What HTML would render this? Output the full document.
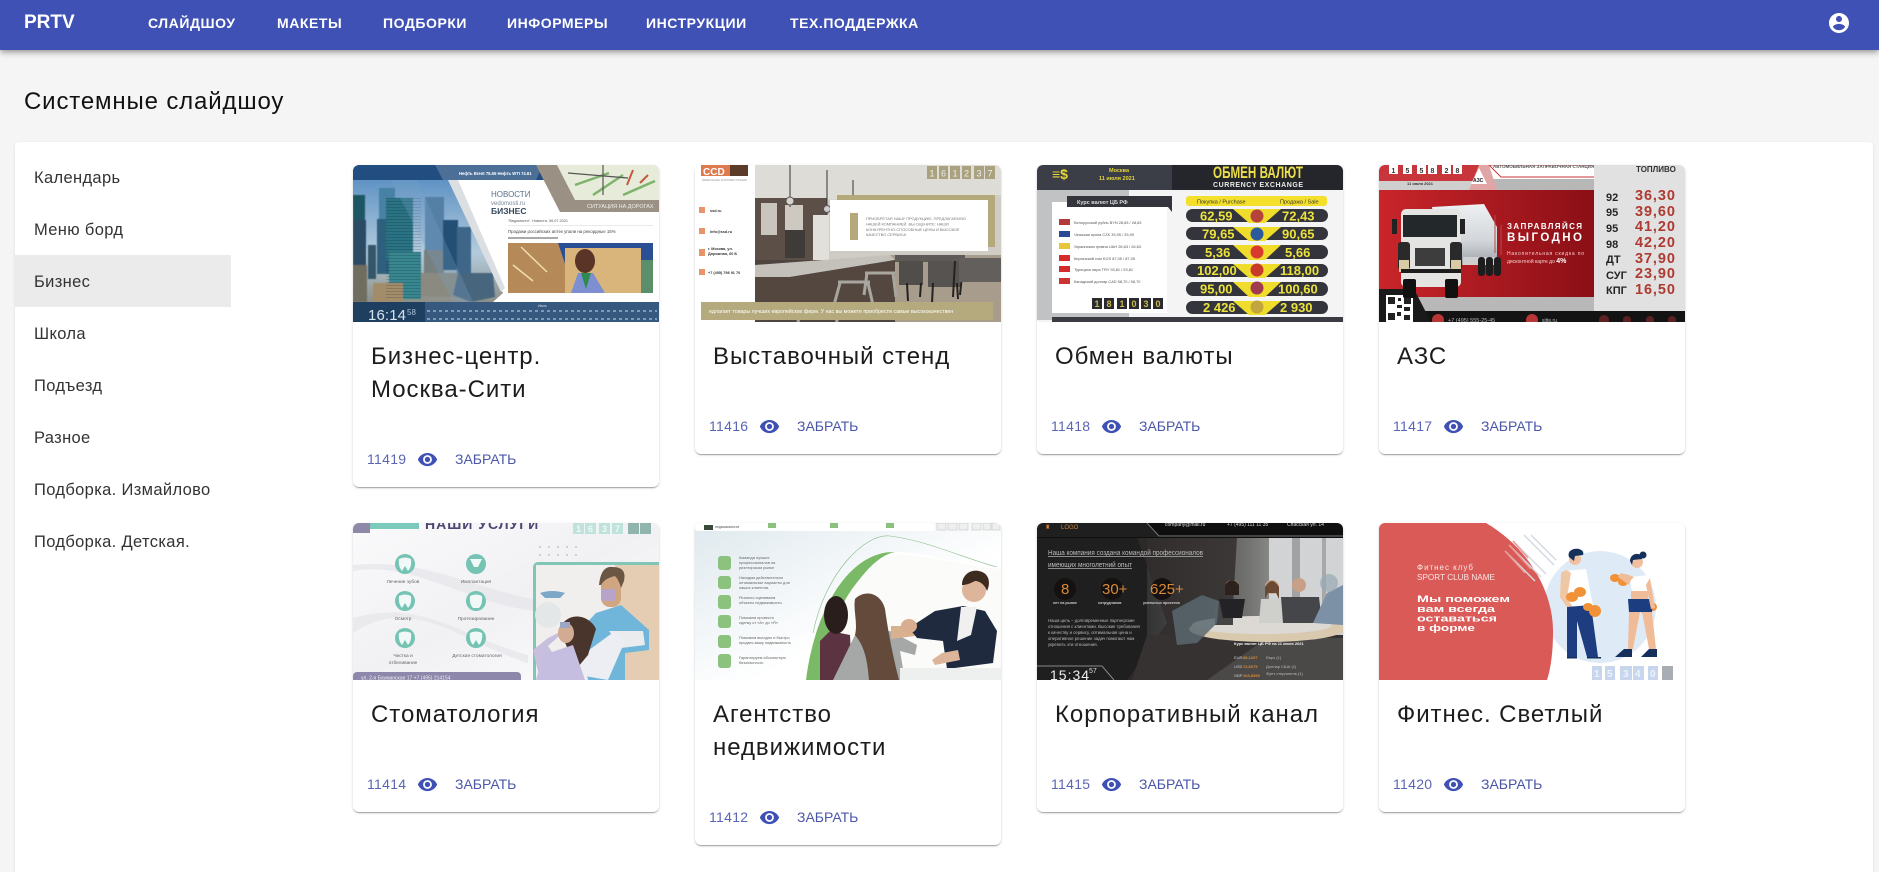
<!DOCTYPE html>
<html lang="ru"><head><meta charset="utf-8"><title>PRTV</title>
<style>
*{box-sizing:border-box}
html,body{margin:0;padding:0;width:1879px;height:863px;overflow:hidden;background:#f5f5f5;font-family:"Liberation Sans",sans-serif;color:rgba(0,0,0,.87)}
.hd{position:absolute;left:0;top:0;width:1879px;height:50px;background:#3f51b5;box-shadow:0 2px 4px -1px rgba(0,0,0,.2),0 4px 5px rgba(0,0,0,.14),0 1px 10px rgba(0,0,0,.12);z-index:3}
.hd span{position:absolute;top:0;line-height:46px;color:#fff;font-size:14px;font-weight:700;white-space:nowrap;letter-spacing:.55px}
.hd .logo{font-size:19px;left:24px;letter-spacing:0}
.hd svg{position:absolute;left:1827px;top:11px}
h1{position:absolute;left:24px;top:86px;margin:0;font-size:24px;line-height:32px;font-weight:400;color:#111;letter-spacing:.85px}
.panel{position:absolute;left:15px;top:142px;width:1858px;height:730px;background:#fff;border-radius:4px 4px 0 0;box-shadow:0 1px 3px rgba(0,0,0,.1)}
.it{position:absolute;left:15px;width:216px;height:52px;line-height:54px;padding-left:19px;font-size:16.5px;letter-spacing:.35px;color:#333}
.it.on{background:#ebebeb}
.card{position:absolute;width:306px;background:#fff;border-radius:6px;box-shadow:0 2px 1px -1px rgba(0,0,0,.2),0 1px 1px rgba(0,0,0,.14),0 1px 3px rgba(0,0,0,.12);overflow:hidden}
.card>svg{position:absolute;left:0;top:0;display:block;filter:blur(.35px)}
.t{position:absolute;left:18px;top:175px;font-size:24px;line-height:33px;color:#1c1c1c;width:288px;letter-spacing:.95px;white-space:nowrap}
.f{position:absolute;left:0;bottom:12px;height:32px;width:100%;line-height:32px;font-size:14px;color:#5a66b4}
.f b{position:absolute;left:14px;font-weight:400;letter-spacing:.3px}
.f i{position:absolute;left:102px;font-style:normal;color:#4a56a8;letter-spacing:0}
.f svg{position:absolute;left:63.5px;top:5.5px}
</style></head><body>
<div class="hd">
<span class="logo">PRTV</span>
<span style="left:148px">СЛАЙДШОУ</span><span style="left:277px">МАКЕТЫ</span><span style="left:383px">ПОДБОРКИ</span><span style="left:507px">ИНФОРМЕРЫ</span><span style="left:646px">ИНСТРУКЦИИ</span><span style="left:790px">ТЕХ.ПОДДЕРЖКА</span>
<svg width="24" height="24" viewBox="0 0 24 24" fill="#fff"><path d="M12 2C6.48 2 2 6.48 2 12s4.48 10 10 10 10-4.48 10-10S17.52 2 12 2zm0 3c1.66 0 3 1.34 3 3s-1.34 3-3 3-3-1.34-3-3 1.34-3 3-3zm0 14.2c-2.5 0-4.71-1.28-6-3.22.03-1.99 4-3.08 6-3.08 1.99 0 5.97 1.09 6 3.08-1.29 1.94-3.5 3.22-6 3.22z"/></svg>
</div>
<h1>Системные слайдшоу</h1>
<div class="panel"></div>
<div class="it" style="top:151px">Календарь</div>
<div class="it" style="top:203px">Меню борд</div>
<div class="it on" style="top:255px">Бизнес</div>
<div class="it" style="top:307px">Школа</div>
<div class="it" style="top:359px">Подъезд</div>
<div class="it" style="top:411px">Разное</div>
<div class="it" style="top:463px">Подборка. Измайлово</div>
<div class="it" style="top:515px">Подборка. Детская.</div>

<svg width="0" height="0" style="position:absolute"><defs>
<path id="eye" d="M12 4.5C7 4.5 2.73 7.61 1 12c1.73 4.39 6 7.5 11 7.5s9.27-3.11 11-7.5c-1.73-4.39-6-7.5-11-7.5zM12 17c-2.76 0-5-2.24-5-5s2.24-5 5-5 5 2.24 5 5-2.24 5-5 5zm0-8c-1.66 0-3 1.34-3 3s1.34 3 3 3 3-1.34 3-3-1.34-3-3-3z"/>
<linearGradient id="sky" x1="0" y1="0" x2="0" y2="1"><stop offset="0" stop-color="#5f93c4"/><stop offset=".6" stop-color="#b4cbdd"/><stop offset="1" stop-color="#8d8f86"/></linearGradient>
<linearGradient id="red" x1="0" y1="0" x2="1" y2="0"><stop offset="0" stop-color="#c9252a"/><stop offset="1" stop-color="#8b0f16"/></linearGradient>
<linearGradient id="pale" x1="0" y1="0" x2="1" y2="1"><stop offset="0" stop-color="#dfe9ee"/><stop offset=".6" stop-color="#fff"/></linearGradient>
<linearGradient id="wave" x1="0" y1="0" x2="1" y2="1"><stop offset="0" stop-color="#fafafb"/><stop offset=".5" stop-color="#f1f1f4"/><stop offset="1" stop-color="#fdfdfe"/></linearGradient>
<linearGradient id="office" x1="0" y1="0" x2="1" y2="0"><stop offset="0" stop-color="#333"/><stop offset=".5" stop-color="#6f6f6d"/><stop offset="1" stop-color="#cfd0d1"/></linearGradient>
<linearGradient id="silver" x1="0" y1="0" x2="0" y2="1"><stop offset="0" stop-color="#eef0f2"/><stop offset=".6" stop-color="#d2d6da"/><stop offset="1" stop-color="#9da2a8"/></linearGradient>
<filter id="bl"><feGaussianBlur stdDeviation=".6"/></filter>
<pattern id="win" width="3" height="3" patternUnits="userSpaceOnUse"><rect width="3" height="3" fill="none"/><rect width="3" height="1" fill="#000" opacity=".15"/></pattern>
</defs></svg>

<!-- card 1 -->
<div class="card" style="left:353px;top:165px;height:322px">
<svg width="306" height="157" viewBox="0 0 306 157" font-family="Liberation Sans">
<rect width="306" height="157" fill="#fff"/>
<polygon points="0,15 96,15 150,128 140,137 0,137" fill="url(#sky)"/>
<g filter="url(#bl)">
<rect x="0" y="30" width="12" height="25" fill="#1a5763"/><rect x="0" y="55" width="13" height="82" fill="#2a4c63"/>
<rect x="26" y="23" width="16" height="76" fill="#4781a3"/>
<rect x="24" y="54" width="12" height="55" fill="#2f5f7c"/>
<rect x="33" y="33" width="27" height="62" fill="#2a7385"/>
<rect x="36" y="87" width="32" height="47" fill="#37868f"/>
<rect x="72" y="32" width="19" height="58" fill="#5580a5"/><rect x="71" y="85" width="20" height="45" fill="#777f7f"/>
<rect x="90" y="55" width="15" height="50" fill="#214f73"/>
<rect x="104" y="62" width="14" height="50" fill="#3d6688"/>
<rect x="15" y="80" width="8" height="34" fill="#36566a"/>
<rect x="0" y="100" width="14" height="37" fill="#6e6d60"/><rect x="20" y="118" width="30" height="19" fill="#a28c6a"/>
<rect x="68" y="108" width="40" height="24" fill="#8a8a80"/>
<polygon points="105,108 140,108 142,132 118,137 100,130" fill="#46667e"/>
</g>
<rect x="33" y="33" width="35" height="100" fill="url(#win)"/>
<polygon points="38,15 64,15 120,137 100,137" fill="#7aa2c6" opacity=".28"/>
<rect width="192" height="15" fill="#224d80"/>
<polygon points="82,0 190,0 183,15 90,15" fill="#4b6f97"/>
<polygon points="95,15 105,15 152,123 148,127" fill="#dcdfe2"/>
<polygon points="183,0 306,0 306,47 207,47" fill="#9a9084"/>
<polygon points="204,0 306,0 306,35 222,35" fill="#e7ebd9"/>
<path d="M222 20l34-12M240 30l30-20M270 30l32-14" stroke="#7db36a" stroke-width="2.5" fill="none"/>
<path d="M250 0v30M215 8l60 5" stroke="#555" stroke-width="1.2" fill="none"/>
<path d="M280 5l-6 15M295 10l-8 8" stroke="#c55a3a" stroke-width="2" fill="none"/>
<text x="234" y="43" font-size="5.5" fill="#f3f0e8">СИТУАЦИЯ НА ДОРОГАХ</text>
<text x="106" y="10" font-size="4.2" font-weight="700" fill="#fff">Нефть Brent 75.55  Нефть WTI 74.61</text>
<text x="138" y="32" font-size="8" fill="#5a6f87">НОВОСТИ</text>
<text x="138" y="40" font-size="6" fill="#7a8a9a">vedomosti.ru</text>
<text x="138" y="49" font-size="8.5" font-weight="700" fill="#33475c">БИЗНЕС</text>
<text x="155" y="57" font-size="3.8" fill="#555">"Ведомости". Новости, 06.07.2021</text>
<rect x="155" y="60" width="145" height=".6" fill="#ddd"/>
<text x="155" y="68" font-size="4.4" fill="#444">Продажи российских аптек упали на рекордные 15%</text>
<rect x="155" y="72" width="50" height="2" fill="#aaa"/>
<rect x="155" y="78" width="145" height="50" fill="#2b4f95"/>
<polygon points="155,78 205,78 222,128 155,128" fill="#b58a58"/>
<rect x="212" y="83" width="76" height="45" fill="#d9b57c"/>
<rect x="288" y="95" width="12" height="33" fill="#5a8f6a"/>
<path d="M168 82l26 25M160 100l20 16" stroke="#f0dcae" stroke-width="1.5"/>
<ellipse cx="232" cy="96" rx="10" ry="12" fill="#5a3426"/>
<polygon points="218,128 225,108 240,108 252,128" fill="#7d8fd0"/>
<polygon points="228,108 238,108 233,124" fill="#2d8a50"/>
<rect x="0" y="137" width="306" height="20" fill="#37597f"/>
<rect x="0" y="137" width="72" height="20" fill="#1f3f60"/>
<text x="15" y="155" font-size="15" fill="#d6e4ef" textLength="38">16:14</text>
<text x="54" y="150" font-size="8" fill="#a9c1d6">58</text>
<path d="M74 146H304M74 154H304" stroke="#7e9ab7" stroke-width="2" stroke-dasharray="3 3"/>
<text x="185" y="142" font-size="3.5" fill="#dde">Июль</text>
</svg>
<div class="t">Бизнес-центр.<br>Москва-Сити</div>
<div class="f"><b>11419</b><svg width="21" height="21" viewBox="0 0 24 24" fill="#3f51b5"><use href="#eye"/></svg><i>ЗАБРАТЬ</i></div>
</div>

<!-- card 2 -->
<div class="card" style="left:695px;top:165px;height:289px">
<svg width="306" height="157" viewBox="0 0 306 157" font-family="Liberation Sans">
<rect width="306" height="157" fill="#fff"/>
<rect x="60" y="0" width="246" height="157" fill="#cfccc6"/>
<polygon points="60,0 306,0 306,30 180,35 60,34" fill="#dedcd7"/>
<rect x="60" y="33" width="72" height="65" fill="#5b4f48"/>
<rect x="66" y="38" width="16" height="32" fill="#c9c5be"/><rect x="90" y="40" width="18" height="28" fill="#cdc9c1"/>
<rect x="90" y="65" width="20" height="28" fill="#3f3b38"/>
<rect x="118" y="50" width="16" height="55" fill="#e2e0da"/>
<rect x="195" y="90" width="111" height="67" fill="#a89c8c"/>
<rect x="60" y="95" width="140" height="62" fill="#4e443e"/>
<polygon points="60,100 195,90 200,95 95,112 60,112" fill="#c4c0ba"/>
<polygon points="60,112 95,112 200,95 200,135 60,157" fill="#54473f"/>
<path d="M104 141h38M106 141l-3 16M140 141l2 16M143 117h32M145 118l-6 22M173 118l5 22M170 108h30M172 108l-3 22M198 108l3 24" stroke="#a9a59f" stroke-width="3" fill="none"/>
<rect x="200" y="90" width="70" height="7" fill="#5d5a57"/>
<rect x="204" y="96" width="24" height="24" fill="#504d4b"/><rect x="233" y="96" width="32" height="26" fill="#565351"/>
<path d="M212 118l1 18M226 118l-1 14M238 118l-1 20M262 118l1 16M268 100l-3 30M260 96l-2 36" stroke="#252322" stroke-width="2"/>
<rect x="264" y="93" width="42" height="24" fill="#625f5d"/>
<path d="M95 0v42M132 5v45M158 15v40" stroke="#333" stroke-width="1"/>
<circle cx="95" cy="36" r="4" fill="#d5d2cb" stroke="#555"/><circle cx="132" cy="44" r="3.5" fill="#ccc" stroke="#555"/>
<rect x="142" y="30" width="158" height="52" fill="#b4a97a"/>
<rect x="135" y="35" width="158" height="51" fill="#fff"/>
<rect x="155" y="48" width="8" height="27" fill="#b4a97a"/>
<text x="171" y="55" font-size="3.9" fill="#777">ПРИОБРЕТАЯ НАШУ ПРОДУКЦИЮ, ПРЕДЛАГАЕМУЮ</text>
<text x="171" y="60.500" font-size="3.9" fill="#777">НАШЕЙ КОМПАНИЕЙ, ВЫ ОЦЕНИТЕ: НАШИ</text>
<text x="171" y="66" font-size="3.9" fill="#777">КОНКУРЕНТНО-СПОСОБНЫЕ ЦЕНЫ И ВЫСОКОЕ</text>
<text x="171" y="71" font-size="3.9" fill="#777">КАЧЕСТВО СЕРВИСА</text>
<rect x="6" y="0" width="29" height="11" fill="#dd7a4e"/><rect x="35" y="0" width="18" height="11" fill="#5a3c28"/>
<text x="8" y="10" font-size="10" font-weight="700" fill="#fff">CCD</text>
<text x="7" y="16" font-size="2.8" fill="#999">МЕБЕЛЬНЫЕ КОМПЛЕКТУЮЩИЕ</text>
<g fill="#e8946b"><rect x="4" y="42" width="6" height="6"/><rect x="4" y="63" width="6" height="6"/><rect x="4" y="84" width="6" height="7"/><rect x="4" y="104" width="6" height="6"/></g>
<g font-size="3.8" fill="#333" font-weight="700"><text x="15" y="47">ssd.ru</text><text x="15" y="68">info@ssd.ru</text><text x="13" y="85">г. Москва, ул.</text><text x="13" y="90">Дорожная, 60 Б</text><text x="13" y="109">+7 (495) 798 91 70</text></g>
<rect x="6" y="137" width="292" height="18" fill="#b5aa7d"/>
<text x="14" y="148" font-size="5.300" fill="#fff">едлагает товары лучших европейских фирм. У нас вы можете приобрести самые высококачествен</text>
<g fill="#aaa27e"><rect x="232" y="1" width="10" height="13"/><rect x="244" y="1" width="9" height="13"/><rect x="255" y="1" width="10" height="13"/><rect x="267" y="1" width="9" height="13"/><rect x="279" y="1" width="10" height="13"/><rect x="290" y="1" width="10" height="13"/></g>
<text x="234.500 246 257.500 269 281.500 292.500" y="11.500" font-size="9" fill="#eee">161237</text>
</svg>
<div class="t">Выставочный стенд</div>
<div class="f"><b>11416</b><svg width="21" height="21" viewBox="0 0 24 24" fill="#3f51b5"><use href="#eye"/></svg><i>ЗАБРАТЬ</i></div>
</div>

<!-- card 3 -->
<div class="card" style="left:1037px;top:165px;height:289px">
<svg width="306" height="157" viewBox="0 0 306 157" font-family="Liberation Sans">
<rect width="306" height="157" fill="#f4f4f4"/>
<rect y="0" width="135" height="25" fill="#3b3d47"/><rect x="135" width="171" height="25" fill="#25262c"/>
<rect y="25" width="92" height="130" fill="#c1c2c4"/>
<rect x="15" y="37" width="115" height="111" fill="#fff"/>
<polygon points="30,31 135,31 135,47 131,42 30,42" fill="#33343c"/>
<text x="40" y="39" font-size="5.500" font-weight="700" fill="#ddd">Курс валют ЦБ РФ</text>
<text x="176" y="13" font-size="17" font-weight="700" fill="#ecdf4a" textLength="90" lengthAdjust="spacingAndGlyphs">ОБМЕН ВАЛЮТ</text>
<text x="176" y="22" font-size="7" font-weight="700" fill="#e8e8e8" textLength="90">CURRENCY EXCHANGE</text>
<text x="72" y="7" font-size="5.500" font-weight="700" fill="#e6d836">Москва</text>
<text x="62" y="15" font-size="5.500" font-weight="700" fill="#e6d836">11 июля 2021</text>
<text x="15" y="14" font-size="14" font-weight="700" fill="#e6d836">≡$</text>
<g font-size="3.900" fill="#555">
<rect x="22" y="54" width="11" height="6" fill="#b23a3a"/><text x="37" y="59">Белорусский рубль  BYN       28,63 / 28,63</text>
<rect x="22" y="66" width="11" height="6" fill="#2b4a96"/><text x="37" y="71">Чешская крона      CZK       33,95 / 33,99</text>
<rect x="22" y="78" width="11" height="6" fill="#e8c63a"/><text x="37" y="83">Украинская гривна  UAH       26,63 / 26,63</text>
<rect x="22" y="90" width="11" height="6" fill="#d42c2c"/><text x="37" y="95">Киргизский сом     KGS       87,05 / 87,05</text>
<rect x="22" y="101" width="11" height="6" fill="#d42c2c"/><text x="37" y="106">Турецкая лира      TRY       93,81 / 93,81</text>
<rect x="22" y="113" width="11" height="6" fill="#cc3333"/><text x="37" y="118">Канадский доллар   CAD       58,70 / 58,70</text>
</g>
<g fill="#2a2b30"><rect x="55" y="133" width="10" height="11"/><rect x="67" y="133" width="10" height="11"/><rect x="80" y="133" width="10" height="11"/><rect x="92" y="133" width="10" height="11"/><rect x="104" y="133" width="10" height="11"/><rect x="116" y="133" width="10" height="11"/></g>
<text x="57.500 69.500 82.500 94.500 106.500 118.500" y="142" font-size="9" font-weight="700" fill="#cbb94a">181030</text>
<rect x="149" y="31" width="141" height="10" rx="3" fill="#f4df2b"/>
<text x="160" y="38.500" font-size="5.500" fill="#333">Покупка / Purchase</text><text x="243" y="38.500" font-size="5.500" fill="#333">Продажа / Sale</text>
<g fill="#33343c"><rect x="149" y="44" width="142" height="13" rx="6.500"/><rect x="149" y="62" width="142" height="13" rx="6.500"/><rect x="149" y="80" width="142" height="14" rx="7"/><rect x="149" y="99" width="142" height="13" rx="6.500"/><rect x="149" y="117" width="142" height="14" rx="7"/><rect x="149" y="136" width="142" height="13" rx="6.500"/></g>
<g fill="#f0dc2a"><polygon points="196,44 244,44 228,58 212,58"/><polygon points="196,62 244,62 228,76 212,76"/><polygon points="196,80 244,80 228,95 212,95"/><polygon points="196,99 244,99 228,113 212,113"/><polygon points="196,117 244,117 228,132 212,132"/><polygon points="196,136 244,136 228,150 212,150"/></g>
<circle cx="220" cy="51" r="6.500" fill="#b5433c"/><circle cx="220" cy="69" r="6.500" fill="#2a5a9c"/><circle cx="220" cy="87" r="6.500" fill="#d83a2e"/><circle cx="220" cy="105" r="6.500" fill="#c83a2a"/><circle cx="220" cy="123" r="6.500" fill="#a03a50"/><circle cx="220" cy="142" r="6.500" fill="#c2a53c"/>
<g font-size="13" font-weight="700" fill="#ece23c">
<text x="163" y="55.500">62,59</text><text x="245" y="55.500">72,43</text>
<text x="165" y="73.500">79,65</text><text x="245" y="73.500">90,65</text>
<text x="168" y="92">5,36</text><text x="248" y="92">5,66</text>
<text x="160" y="110">102,00</text><text x="243" y="110">118,00</text>
<text x="163" y="128.500">95,00</text><text x="241" y="128.500">100,60</text>
<text x="166" y="147">2 426</text><text x="243" y="147">2 930</text>
</g>
<rect x="15" y="152" width="291" height="5" fill="#3a3b43"/>
</svg>
<div class="t">Обмен валюты</div>
<div class="f"><b>11418</b><svg width="21" height="21" viewBox="0 0 24 24" fill="#3f51b5"><use href="#eye"/></svg><i>ЗАБРАТЬ</i></div>
</div>

<!-- card 4 -->
<div class="card" style="left:1379px;top:165px;height:289px">
<svg width="306" height="157" viewBox="0 0 306 157" font-family="Liberation Sans">
<rect width="306" height="157" fill="#dedede"/>
<rect width="215" height="25" fill="#fff"/>
<rect y="0" width="100" height="16" fill="#c8353a"/>
<rect y="16" width="110" height="9" fill="#cfcfcf"/><rect x="110" y="14" width="105" height="11" fill="#b7b7b7"/>
<polygon points="90,25 100,0 110,0 118,25" fill="#e1a5a5"/>
<polygon points="92,19 100,3 108,19" fill="#fff"/>
<text x="94" y="17" font-size="5" font-weight="700" fill="#222">АЗС</text>
<polygon points="110,0 235,0 226,12 122,12" fill="#fff" stroke="#c8353a"/>
<text x="114" y="3" font-size="4.500" font-weight="700" fill="#555">АВТОМОБИЛЬНАЯ ЗАПРАВОЧНАЯ СТАНЦИЯ</text>
<g fill="#fff"><rect x="10" y="0" width="9" height="9"/><rect x="24" y="0" width="9" height="9"/><rect x="38" y="0" width="9" height="9"/><rect x="49" y="0" width="9" height="9"/><rect x="63" y="0" width="9" height="9"/><rect x="74" y="0" width="9" height="9"/></g>
<text x="12.500 26.500 40.500 51.500 65.500 76.500" y="8" font-size="7" font-weight="700" fill="#333">155828</text>
<text x="28" y="20" font-size="4" font-weight="700" fill="#333">11 июля 2021</text>
<rect y="25" width="215" height="107" fill="url(#red)"/>
<rect y="132" width="215" height="14" fill="#b8b8b8"/>
<rect x="215" width="91" height="146" fill="#e1e1e1"/>
<rect y="146" width="306" height="11" fill="#131313"/>
<polygon points="0,124 35,124 52,157 0,157" fill="#1a1a1a"/>
<rect x="7" y="130" width="27" height="27" fill="#fff"/>
<path d="M9 132h7v7H9zM25 132h7v7h-7zM9 148h7v7H9zM19 133h3v3h-3zM18 140h5v3h-5zM25 142h6v4h-6zM18 147h4v4h-4zM25 150h6v5h-6z" fill="#222"/>
<!-- truck -->
<polygon points="53,42 105,39 118,62 118,92 90,100 60,100" fill="url(#silver)"/>
<rect x="84" y="92" width="36" height="8" fill="#cfcfcf"/>
<g fill="#1d1d1d"><rect x="99" y="92" width="7" height="19" rx="3"/><rect x="107" y="92" width="7" height="19" rx="3"/><rect x="115" y="92" width="7" height="19" rx="3"/></g>
<path d="M116 50v38M122 60v30" stroke="#b54b4b" stroke-width="1"/>
<rect x="22" y="44" width="60" height="78" rx="5" fill="#e4e4e2"/>
<rect x="24" y="50" width="54" height="22" fill="#23282a"/>
<rect x="36" y="83" width="30" height="18" fill="#3d3d3d"/>
<rect x="19" y="77" width="12" height="28" rx="3" fill="#2a2a2a"/><rect x="71" y="77" width="12" height="28" rx="3" fill="#2a2a2a"/>
<rect x="20" y="95" width="10" height="12" fill="#d9cca4"/><rect x="72" y="95" width="10" height="12" fill="#d9cca4"/>
<rect x="22" y="104" width="60" height="4" fill="#1d1d1d"/>
<rect x="24" y="114" width="13" height="19" rx="2" fill="#111"/><rect x="66" y="114" width="13" height="19" rx="2" fill="#111"/>
<rect x="13" y="54" width="5" height="15" fill="#222"/><rect x="81" y="54" width="5" height="15" fill="#222"/>
<text x="128" y="64" font-size="8" font-weight="700" fill="#fff" textLength="75">ЗАПРАВЛЯЙСЯ</text>
<text x="128" y="76" font-size="11.500" font-weight="700" fill="#fff" textLength="75">ВЫГОДНО</text>
<text x="128" y="90" font-size="5" fill="#f2d0d0" textLength="77">Накопительная скидка по</text>
<text x="128" y="98" font-size="5" fill="#f2d0d0">дисконтной карте до <tspan font-size="7" font-weight="700" fill="#fff">4%</tspan></text>
<g font-size="11" font-weight="700" fill="#252525"><text x="227" y="36">92</text><text x="227" y="51">95</text><text x="227" y="67">95</text><text x="227" y="83">98</text><text x="227" y="98">ДТ</text><text x="227" y="114">СУГ</text><text x="227" y="129">КПГ</text></g>
<g font-size="14.500" font-weight="700" fill="#ad3b32" letter-spacing=".9"><text x="256" y="35">36,30</text><text x="256" y="51">39,60</text><text x="256" y="66">41,20</text><text x="256" y="82">42,20</text><text x="256" y="98">37,90</text><text x="256" y="113">23,90</text><text x="256" y="129">16,50</text></g>
<text x="257" y="7" font-size="8" font-weight="700" fill="#333">ТОПЛИВО</text>
<circle cx="59" cy="155" r="6" fill="#b93636"/><circle cx="153" cy="155" r="6" fill="#b93636"/>
<text x="69" y="157" font-size="5.500" fill="#bbb">+7 (495) 555-25-45</text><text x="163" y="157" font-size="5" fill="#bbb">sitte.ru</text>
<g fill="#5d2020"><circle cx="225" cy="155" r="5"/><circle cx="248" cy="155" r="4"/><circle cx="271" cy="155" r="4"/><circle cx="293" cy="155" r="4"/></g>
</svg>
<div class="t">АЗС</div>
<div class="f"><b>11417</b><svg width="21" height="21" viewBox="0 0 24 24" fill="#3f51b5"><use href="#eye"/></svg><i>ЗАБРАТЬ</i></div>
</div>

<!-- card 5 -->
<div class="card" style="left:353px;top:523px;height:289px">
<svg width="306" height="157" viewBox="0 0 306 157" font-family="Liberation Sans">
<rect width="306" height="157" fill="url(#wave)"/>
<path d="M0 48c60-10 110 30 180 40v-12C120 65 70 35 0 42zM0 110c60-40 110 10 175 30v-8C110 115 70 75 0 95z" fill="#e6e6ea" opacity=".7"/>
<rect width="17" height="10" fill="#8f89a8"/><rect x="17" width="49" height="6" fill="#7ccabb"/>
<text x="72" y="6" font-size="14" font-weight="700" fill="#4e4670" letter-spacing="1">НАШИ  УСЛУГИ</text>
<g fill="#bfe3db"><rect x="220" y="0" width="11" height="11"/><rect x="232" y="0" width="11" height="11"/><rect x="246" y="0" width="11" height="11"/><rect x="259" y="0" width="11" height="11"/></g><g fill="#8fb5ad"><rect x="275" y="0" width="11" height="11"/><rect x="287" y="0" width="11" height="11"/></g>
<text x="223 235 249 262" y="9" font-size="9" font-weight="700" fill="#eef8f6">1637</text>
<g fill="#74c3b3"><circle cx="52" cy="41" r="10"/><circle cx="123" cy="41" r="10"/><circle cx="52" cy="78" r="10"/><circle cx="123" cy="78" r="10"/><circle cx="52" cy="115" r="10"/><circle cx="123" cy="115" r="10"/></g>
<g fill="#fff" opacity=".9"><path d="M46 36q6-3 12 0q1 8-3 12l-3-5l-3 5q-4-4-3-12zM117 36h12l-4 8h-4zM117 73q6-3 12 0q1 8-3 12h-6q-4-4-3-12zM46 73q6-3 12 0q1 8-3 12l-3-5-3 5q-4-4-3-12zM46 110q6-3 12 0q1 8-3 12l-3-5-3 5q-4-4-3-12zM117 110q6-3 12 0q1 8-3 12l-3-5-3 5q-4-4-3-12z"/></g>
<g font-size="4.800" fill="#666" text-anchor="middle"><text x="50" y="60">Лечение зубов</text><text x="123" y="60">Имплантация</text><text x="50" y="97">Осмотр</text><text x="123" y="97">Протезирование</text><text x="50" y="134">Чистка и</text><text x="50" y="141">отбеливание</text><text x="124" y="134">Детская стоматология</text></g>
<g fill="#999"><circle cx="187" cy="24" r=".7"/><circle cx="196" cy="24" r=".7"/><circle cx="205" cy="24" r=".7"/><circle cx="214" cy="24" r=".7"/><circle cx="223" cy="24" r=".7"/><circle cx="187" cy="32" r=".7"/><circle cx="196" cy="32" r=".7"/><circle cx="205" cy="32" r=".7"/><circle cx="214" cy="32" r=".7"/><circle cx="223" cy="32" r=".7"/></g>
<rect x="0" y="149" width="168" height="12" rx="4" fill="#8d87ac"/>
<text x="8" y="156.500" font-size="5" fill="#eee">ул. 2-я Бауманская 17        +7 (495) 214154</text>
<rect x="180" y="39" width="130" height="125" rx="5" fill="#7fc6b7"/>
<rect x="183" y="42" width="123" height="115" fill="#f0efed"/>
<rect x="262" y="42" width="44" height="115" fill="#e5cdb4"/>
<path d="M187 70q12-4 25 0l-5 5h-15z" fill="#7da7c7"/>
<circle cx="195" cy="92" r="13" fill="#e4e7e8"/>
<polygon points="226,108 243,90 268,82 296,107 296,127 272,130 272,157 235,157" fill="#6fb6da"/>
<rect x="248" y="50" width="20" height="34" rx="9" fill="#d0a582"/>
<path d="M246 62q2-20 14-18q14 0 11 14l-3 7q-2-8-6-12q-10 2-14 9z" fill="#6b5644"/>
<rect x="248" y="66" width="15" height="12" rx="3" fill="#b8a4c8"/>
<polygon points="256,108 290,108 292,122 268,125" fill="#eaeced"/>
<polygon points="232,130 262,108 272,118 255,157 226,152" fill="#eceef3"/>
<path d="M215 105l-20 18 22 34h-30l-7-30 15-12z" fill="#c8bedd"/>
<path d="M210 100c10-12 28-6 33 6l-8 26-10 12c-8-14-18-28-15-44z" fill="#4a352c"/>
<ellipse cx="213" cy="110" rx="8" ry="10" fill="#d2ab93"/>
<rect x="207" y="99" width="10" height="6" fill="#9aa8c6"/>
<polygon points="190,132 220,122 232,157 183,157" fill="#c6bee0"/>
</svg>
<div class="t">Стоматология</div>
<div class="f"><b>11414</b><svg width="21" height="21" viewBox="0 0 24 24" fill="#3f51b5"><use href="#eye"/></svg><i>ЗАБРАТЬ</i></div>
</div>

<!-- card 6 -->
<div class="card" style="left:695px;top:523px;height:322px">
<svg width="306" height="157" viewBox="0 0 306 157" font-family="Liberation Sans">
<rect width="306" height="157" fill="url(#pale)"/>
<rect width="240" height="8" rx="3" fill="#fff"/>
<rect x="9" y="2" width="9" height="5" fill="#3a4a3a"/><text x="20" y="5" font-size="3.600" fill="#555">недвижимости</text>
<g fill="#8bc17c"><rect x="73" y="0" width="8" height="5"/><rect x="135" y="0" width="8" height="5"/><rect x="191" y="0" width="8" height="5"/></g>
<g fill="#eef0ef" stroke="#bbb" stroke-width=".5"><rect x="242" y="0" width="9" height="7"/><rect x="253" y="0" width="9" height="7"/><rect x="264" y="0" width="9" height="7"/><rect x="277" y="0" width="9" height="7"/><rect x="288" y="0" width="8" height="7"/><rect x="297" y="0" width="8" height="7"/></g>
<path d="M118 110C130 50 170 10 195 13c40 5 80 25 111 32" fill="none" stroke="#8bb98a" stroke-width=".6"/>
<path d="M111 157C120 90 155 28 200 29c35 0 70 15 106 15v113z" fill="#fff"/>
<path d="M111 157C120 85 155 28 200 29c-30 5-70 70-72 128z" fill="#7ab965"/>
<path d="M128 157c2-60 35-115 72-125 40 0 70 12 106 14v111z" fill="#fbfbf9"/>
<g fill="#8bc27e"><rect x="23" y="33" width="13" height="14" rx="3"/><rect x="23" y="53" width="13" height="13" rx="3"/><rect x="23" y="72" width="13" height="14" rx="3"/><rect x="23" y="92" width="13" height="13" rx="3"/><rect x="23" y="112" width="13" height="13" rx="3"/><rect x="23" y="131" width="13" height="14" rx="3"/></g>
<g font-size="3.900" fill="#666"><text x="44" y="36">Команда лучших</text><text x="44" y="41">профессионалов на</text><text x="44" y="46">риэлторском рынке</text><text x="44" y="56">Находим действительно</text><text x="44" y="61">оптимальные варианты для</text><text x="44" y="66">наших клиентов.</text><text x="44" y="76">Реально оцениваем</text><text x="44" y="81">объекты недвижимости.</text><text x="44" y="96">Поможем провести</text><text x="44" y="101">сделку от «А» до «Я»</text><text x="44" y="116">Поможем выгодно и быстро</text><text x="44" y="121">продать вашу недвижимость</text><text x="44" y="136">Гарантируем абсолютную</text><text x="44" y="141">безопасность</text></g>
<polygon points="125,157 125,118 135,108 155,112 157,157" fill="#5c3340"/>
<ellipse cx="141" cy="92" rx="12" ry="19" fill="#2a1e1c"/>
<polygon points="138,157 160,112 195,108 222,122 220,132 205,128 210,157" fill="#a5a8a6"/>
<path d="M160 76c10-10 26-6 30 10 3 22 8 48 14 71h-30c-2-25-6-35-14-45 3-12-2-25 0-36z" fill="#644a3a"/>
<path d="M196 103l22 0 2 10-24 3z" fill="#d9b18e"/>
<polygon points="214,105 240,88 268,83 290,88 302,108 298,140 252,146 248,118 222,115" fill="#1f2a3f"/>
<polygon points="266,84 282,84 276,112 262,118" fill="#f0f0f0"/>
<circle cx="279" cy="67" r="12" fill="#ddb59a"/>
<path d="M267 62c0-12 12-18 22-12 6 4 6 12 3 18-2-6-7-10-12-10-6 3-9 4-13 4z" fill="#3e2b20"/>
<ellipse cx="214" cy="103" rx="8" ry="7" fill="#d9ae90"/>
<path d="M240 142l25-5-2-10-16 3-10 7z" fill="#ddb59a"/>
<rect x="205" y="145" width="101" height="12" fill="#eef0ef"/>
</svg>
<div class="t">Агентство<br>недвижимости</div>
<div class="f"><b>11412</b><svg width="21" height="21" viewBox="0 0 24 24" fill="#3f51b5"><use href="#eye"/></svg><i>ЗАБРАТЬ</i></div>
</div>

<!-- card 7 -->
<div class="card" style="left:1037px;top:523px;height:289px">
<svg width="306" height="157" viewBox="0 0 306 157" font-family="Liberation Sans">
<rect width="306" height="157" fill="#201f20"/>
<rect x="110" y="14" width="196" height="100" fill="url(#office)"/>
<polygon points="100,14 200,14 195,100 150,157 90,157 130,100" fill="#2f2c2b" opacity=".8"/>
<rect x="232" y="14" width="74" height="85" fill="#d2d3d4"/><rect x="255" y="14" width="8" height="85" fill="#a2a2a2"/><rect x="285" y="14" width="4" height="85" fill="#a8a8a8"/>
<polygon points="110,112 306,112 306,157 95,157" fill="#353231"/>
<polygon points="170,157 230,115 306,115 306,157" fill="#4b4947"/>
<ellipse cx="230" cy="106" rx="78" ry="13" fill="#d9c9ae"/>
<ellipse cx="225" cy="102" rx="70" ry="9" fill="#dcd9d5"/>
<rect x="178" y="78" width="18" height="24" fill="#444"/>
<polygon points="135,88 165,72 182,78 180,100 160,120 140,122" fill="#5b6870" opacity=".85"/>
<circle cx="195" cy="64" r="7" fill="#c9a389"/><polygon points="182,76 208,76 205,95 186,95" fill="#232226"/><path d="M188 62q7-10 14 0l0 10-14 0z" fill="#2c211d"/>
<circle cx="235" cy="64" r="7" fill="#d0a88f"/><polygon points="224,76 247,76 250,100 222,100" fill="#cfcfcb"/><path d="M228 64q7-12 14 0l0 12-3-6-8 0-3 6z" fill="#6a4a34"/>
<circle cx="262" cy="62" r="7" fill="#c8a087"/><polygon points="244,74 282,74 285,100 246,100" fill="#45464a"/>
<path d="M290 70l16-8v40l-30-2z" fill="#7d91a6"/><circle cx="292" cy="60" r="9" fill="#97a9b3" opacity=".7"/>
<rect x="0" y="0" width="306" height="15" fill="#0f0f10"/>
<polygon points="0,0 110,0 122,14 0,14" fill="#201f20"/>
<path d="M110 0l12 13h184" stroke="#777" stroke-width="1" fill="none"/>
<text x="8" y="6" font-size="6" fill="#d88a3a">♜</text><text x="24" y="6" font-size="6" fill="#c9873f">LOGO</text>
<g font-size="5" fill="#ddd"><text x="128" y="3">company@mail.ru</text><text x="190" y="3">+7 (495) 111 11 35</text><text x="250" y="3">Спасская ул. 14</text></g>
<g font-size="7" fill="#bcbcbc"><text x="11" y="32" text-decoration="underline" textLength="155" lengthAdjust="spacingAndGlyphs">Наша компания создана командой профессионалов</text><text x="11" y="44" text-decoration="underline" textLength="84" lengthAdjust="spacingAndGlyphs">имеющих многолетний опыт</text></g>
<circle cx="28" cy="66" r="11" fill="#151110"/><circle cx="75" cy="66" r="11" fill="#151110"/><circle cx="125" cy="66" r="11" fill="#151110"/>
<g font-size="15" fill="#d98a3c"><text x="24" y="71">8</text><text x="65" y="71">30+</text><text x="113" y="71">625+</text></g>
<g font-size="3.700" fill="#ccc" font-weight="700"><text x="16" y="81">лет на рынке</text><text x="61" y="81">сотрудников</text><text x="106" y="81">успешных проектов</text></g>
<g font-size="4.300" fill="#bbb"><text x="11" y="99">Наша цель – долговременные партнерские</text><text x="11" y="105">отношения с клиентами. Высокие требования</text><text x="11" y="111">к качеству и сервису, оптимальная цена и</text><text x="11" y="117">оперативное решение задач помогают нам</text><text x="11" y="123">укрепить эти отношения.</text></g>
<path d="M0 143h65l12 14" stroke="#888" fill="none"/>
<text x="13" y="157" font-size="14" fill="#eee" letter-spacing="1">15:34</text><text x="52" y="150" font-size="7" fill="#ddd">57</text>
<g font-size="4"><text x="197" y="122" fill="#eee" font-weight="700">Курс валют ЦБ РФ на 11 июля 2021</text>
<text x="197" y="136" fill="#ccc">EUR</text><text x="206" y="136" fill="#d88a3c" font-weight="700">88,1297</text><text x="229" y="136" fill="#bbb">Евро (1)</text>
<text x="197" y="145" fill="#ccc">USD</text><text x="206" y="145" fill="#d88a3c" font-weight="700">74,6675</text><text x="229" y="145" fill="#bbb">Доллар США (1)</text>
<text x="197" y="154" fill="#ccc">GBP</text><text x="206" y="154" fill="#d88a3c" font-weight="700">103,8399</text><text x="229" y="152" fill="#bbb">Фунт стерлингов (1)</text></g>
</svg>
<div class="t">Корпоративный канал</div>
<div class="f"><b>11415</b><svg width="21" height="21" viewBox="0 0 24 24" fill="#3f51b5"><use href="#eye"/></svg><i>ЗАБРАТЬ</i></div>
</div>

<!-- card 8 -->
<div class="card" style="left:1379px;top:523px;height:289px">
<svg width="306" height="157" viewBox="0 0 306 157" font-family="Liberation Sans">
<rect width="306" height="157" fill="#fff"/>
<circle cx="221" cy="84" r="56" fill="#deebf7"/>
<path d="M0 0H107C150 25 175 70 174 110 174 128 172 145 168 157H0z" fill="#d95a57"/>
<path d="M126 28l30 30M130 22l32 32M134 18l33 33M145 12l30 30M152 12l25 25" stroke="#d3d9e2" stroke-width="1.500" fill="none"/>
<path d="M126 28l20 22M130 22l22 24M134 18l15 17" stroke="#e99a96" stroke-width="1.500" fill="none"/>
<text x="38" y="47" font-size="8" fill="#f8e6e4" textLength="56">Фитнес клуб</text>
<text x="38" y="57" font-size="8.500" fill="#f8e6e4" textLength="78" lengthAdjust="spacingAndGlyphs">SPORT CLUB NAME</text>
<g font-size="9" font-weight="700" fill="#fff"><text x="38" y="79" textLength="93" lengthAdjust="spacingAndGlyphs">Мы поможем</text><text x="38" y="89" textLength="78" lengthAdjust="spacingAndGlyphs">вам всегда</text><text x="38" y="98.500" textLength="80" lengthAdjust="spacingAndGlyphs">оставаться</text><text x="38" y="108" textLength="58" lengthAdjust="spacingAndGlyphs">в форме</text></g>
<polygon points="186,48 207,46 215,88 188,90" fill="#fff"/>
<path d="M182 50c2-2 6-3 6-3l4 3-4 25 8 12-5 2-10-15z" fill="#f0c7a4"/>
<polygon points="188,84 212,82 219,134 208,134 198,98 198,134 188,134" fill="#1d3d80"/>
<circle cx="196" cy="36" r="6" fill="#f0c0a0"/>
<path d="M190 34c-2-6 4-9 10-8 4 1 5 4 4 6l-8 1-1 5z" fill="#16305c"/>
<g fill="#f19238"><ellipse cx="193" cy="74" rx="6" ry="5"/><ellipse cx="201" cy="69" rx="6" ry="5"/><ellipse cx="216" cy="88" rx="6" ry="6"/><ellipse cx="209" cy="84" rx="5" ry="4"/><ellipse cx="236" cy="55" rx="5" ry="4"/><ellipse cx="244" cy="59" rx="5" ry="4"/><ellipse cx="266" cy="86" rx="5" ry="5"/><ellipse cx="274" cy="84" rx="4" ry="4"/></g>
<polygon points="250,54 271,52 269,68 253,68" fill="#fff"/>
<circle cx="258" cy="39" r="6" fill="#f0c0a0"/><circle cx="264" cy="32" r="3.500" fill="#15305c"/>
<path d="M251 38c0-6 6-9 11-6l1 4-9 1-1 5z" fill="#15305c"/>
<rect x="252" y="68" width="17" height="8" fill="#efbc9a"/>
<polygon points="249,76 274,76 273,89 250,89" fill="#1c3d80"/>
<polygon points="250,89 261,89 254,126 249,126" fill="#f0bc98"/><polygon points="263,89 273,89 277,126 270,126" fill="#f0bc98"/>
<polygon points="245,126 253,126 253,134 236,134" fill="#15305c"/><polygon points="270,126 278,126 278,134 262,134" fill="#15305c"/>
<path d="M239 54l11 8 2-5 3-3-5-2-8-2zM271 55l5 30-4 1-5-24z" fill="#f0bc98"/>
<rect x="188" y="134" width="10" height="1.500" fill="#15305c"/><rect x="208" y="134" width="14" height="1.500" fill="#15305c"/>
<g fill="#c8d6ed"><rect x="213" y="143" width="10" height="14"/><rect x="226" y="143" width="10" height="14"/><rect x="241" y="143" width="12" height="14"/><rect x="254" y="143" width="11" height="14"/><rect x="269" y="143" width="10" height="14"/></g><rect x="283" y="143" width="11" height="14" fill="#a8acb3"/>
<text x="215 228 244 256 271" y="154" font-size="10" font-weight="700" fill="#eef3fb">15340</text>
</svg>
<div class="t">Фитнес. Светлый</div>
<div class="f"><b>11420</b><svg width="21" height="21" viewBox="0 0 24 24" fill="#3f51b5"><use href="#eye"/></svg><i>ЗАБРАТЬ</i></div>
</div>
</body></html>
